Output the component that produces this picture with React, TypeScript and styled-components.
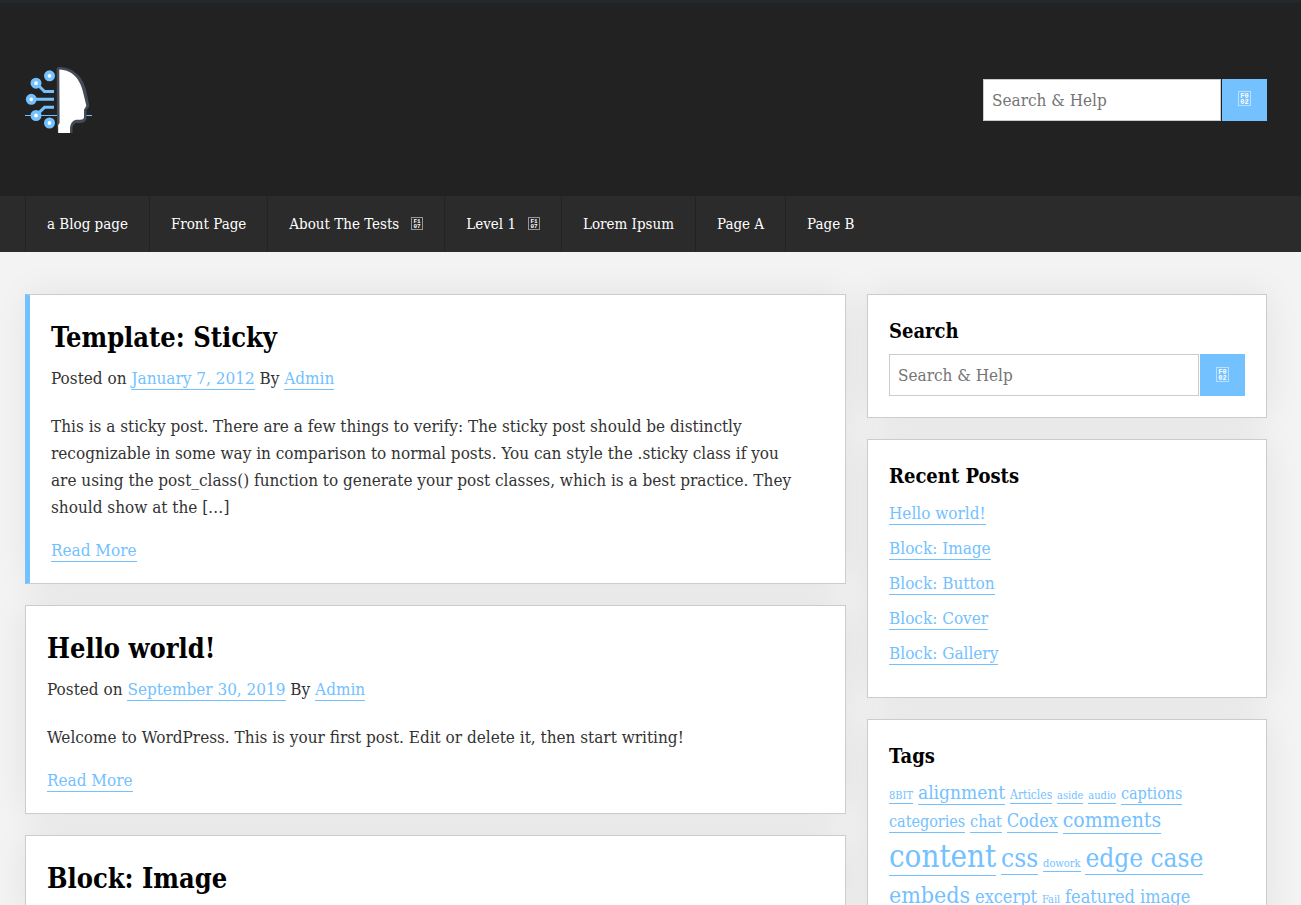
import React from "react";
import styled, { createGlobalStyle } from "styled-components";

const GlobalStyle = createGlobalStyle`
  *, *::before, *::after { box-sizing: border-box; }
  body {
    margin: 0;
    background: #f3f3f3;
    color: #333;
    font-family: "Roboto Slab", "DejaVu Serif Condensed", "DejaVu Serif", serif;
    font-size: 17px;
    line-height: 27px;
  }
`;

const Page = styled.div`
  height: 100vh;
  overflow: hidden;
`;

const Header = styled.header`
  display: flex;
  align-items: center;
  justify-content: space-between;
  height: 196px;
  padding: 0 34px 0 25px;
  background: #222;
  border-top: 3px solid #23282d;
`;

const LogoLink = styled.a`
  display: block;
  padding-top: 2px;
  line-height: 0;
`;

const SearchForm = styled.form<{ $wide?: boolean }>`
  display: grid;
  grid-template-columns: 1fr 45px;
  gap: 1px;
  width: ${(p) => (p.$wide ? "100%" : "284px")};
  margin-top: ${(p) => (p.$wide ? "8px" : "0")};
`;

const SearchInput = styled.input`
  min-width: 0;
  height: 42px;
  padding: 0 8px;
  border: 1px solid #ccc;
  border-radius: 0;
  background: #fff;
  color: #333;
  font: inherit;
  &::placeholder { color: #757575; opacity: 1; }
`;

const SearchButton = styled.button`
  display: flex;
  align-items: center;
  justify-content: center;
  padding: 0 0 2px;
  border: 0;
  background: #73c1ff;
  color: #fff;
  cursor: pointer;
`;

const Nav = styled.nav`
  background: #2b2b2b;
  padding: 0 34px 0 25px;
`;

const Menu = styled.ul`
  display: flex;
  margin: 0;
  padding: 0;
  list-style: none;
`;

const MenuLink = styled.a`
  display: flex;
  align-items: center;
  gap: 12px;
  height: 56px;
  padding: 0 21px;
  border-left: 1px solid #222;
  color: #fff;
  font-size: 15px;
  text-decoration: none;
`;

const SubMark = styled.span`
  display: flex;
  padding-bottom: 2px;
`;

const Content = styled.div`
  display: grid;
  grid-template-columns: 1fr 400px;
  gap: 21px;
  padding: 42px 34px 0 25px;
  isolation: isolate;
`;

const Column = styled.div`
  display: flex;
  flex-direction: column;
  gap: 21px;
`;

const Card = styled.section`
  position: relative;
  padding: 21px;
  border: 1px solid #ccc;
  background: #fff;
  &::before {
    content: "";
    position: absolute;
    inset: 0;
    z-index: -1;
    box-shadow: 0 0 34px rgba(0, 0, 0, 0.08);
  }
`;

const Post = styled(Card)<{ $sticky?: boolean }>`
  padding-bottom: 19px;
  ${(p) => p.$sticky && "border-left: 5px solid #73c1ff;"}
`;

const PostTitle = styled.h2`
  margin: 0;
  color: #000;
  font-size: 27px;
  font-weight: 700;
  line-height: 44px;
`;

const WidgetTitle = styled.h3`
  margin: 0;
  color: #000;
  font-size: 20px;
  font-weight: 700;
  line-height: 30px;
`;

const TextLink = styled.a`
  padding-bottom: 1px;
  color: #73c1ff;
  border-bottom: 1px solid #73c1ff;
  text-decoration: none;
`;

const Meta = styled.p`
  margin: 5px 0 21px;
`;

const Excerpt = styled.p`
  margin: 0 0 16px;
  padding-right: 18px;
`;

const More = styled.p`
  margin: 0;
`;

const RecentList = styled.ul`
  margin: 9px 0;
  padding: 0;
  list-style: none;
`;

const RecentItem = styled.li`
  margin-bottom: 8px;
`;

const Tags = styled.div`
  margin-top: 8px;
  line-height: 1.4;
`;

const Tag = styled(TextLink)<{ $size: number }>`
  font-size: ${(p) => p.$size}px;
`;

const Missing = ({ top, bottom, large }: { top: string; bottom: string; large?: boolean }) => (
  <svg width={large ? 13 : 12} height={large ? 15 : 13} viewBox={large ? "0 0 13 15" : "0 0 12 13"} aria-hidden="true">
    <rect
      x="0.5"
      y="0.5"
      width={large ? 12 : 11}
      height={large ? 14 : 12}
      fill="none"
      stroke="currentColor"
      strokeOpacity="0.5"
    />
    <g fill="currentColor" fontFamily="Liberation Mono" fontSize={large ? 7 : 6} fontWeight="700" textAnchor="middle">
      <text x={large ? 6.5 : 6} y={large ? 7 : 6}>{top}</text>
      <text x={large ? 6.5 : 6} y={large ? 13 : 11}>{bottom}</text>
    </g>
  </svg>
);

const Logo = () => (
  <svg width="67" height="67" viewBox="0 0 67 67" aria-hidden="true">
    <path d="M0 48.5H67" stroke="#73c1ff" />
    <g fill="none" stroke="#73c1ff" strokeWidth="3">
      <path d="M11 16L19.500 24.500H29M6 32.300H29M11 48.500L19.500 40.300H29" />
    </g>
    <g fill="#fff" stroke="#73c1ff" strokeWidth="3.600">
      <circle cx="24.500" cy="8.800" r="3.700" />
      <circle cx="11" cy="16.200" r="3.700" />
      <circle cx="6.300" cy="32.300" r="3.700" />
      <circle cx="11" cy="48.500" r="3.700" />
      <circle cx="24.500" cy="56" r="3.700" />
    </g>
    <path d="M31.700 1.500Q32 0 34.500 0C51 1 59 12 61.500 25L64.300 38.500Q64.500 40 61.500 43V51Q61 56 55 56H51Q48 57 47.500 61V66H33Q32 60 32 54Z" fill="#424b57" />
    <path d="M34.300 2.500C49 3 56 14 58.500 27L61.300 38.500Q61 40 59 42.500V50.500Q58.500 52.700 55 52.700H51Q45.500 54 45 61V66H33.200V58L34.600 56Z" fill="#fff" />
  </svg>
);

const Search = ({ id, wide }: { id: string; wide?: boolean }) => (
  <SearchForm role="search" $wide={wide} onSubmit={(e) => e.preventDefault()}>
    <SearchInput id={id} type="search" aria-label="Search & Help" placeholder="Search & Help" />
    <SearchButton type="submit" aria-label="Search">
      <Missing top="F0" bottom="02" large />
    </SearchButton>
  </SearchForm>
);

const menu = [
  { label: "a Blog page" },
  { label: "Front Page" },
  { label: "About The Tests", sub: true },
  { label: "Level 1", sub: true },
  { label: "Lorem Ipsum" },
  { label: "Page A" },
  { label: "Page B" },
];

const posts = [
  {
    title: "Template: Sticky",
    date: "January 7, 2012",
    sticky: true,
    text: "This is a sticky post. There are a few things to verify: The sticky post should be distinctly recognizable in some way in comparison to normal posts. You can style the .sticky class if you are using the post_class() function to generate your post classes, which is a best practice. They should show at the […]",
  },
  {
    title: "Hello world!",
    date: "September 30, 2019",
    text: "Welcome to WordPress. This is your first post. Edit or delete it, then start writing!",
  },
  { title: "Block: Image" },
];

const recent = ["Hello world!", "Block: Image", "Block: Button", "Block: Cover", "Block: Gallery"];

const tags: [string, number][] = [
  ["8BIT", 11], ["alignment", 19], ["Articles", 12], ["aside", 11], ["audio", 11], ["captions", 16],
  ["categories", 16], ["chat", 16], ["Codex", 18], ["comments", 21], ["content", 31], ["css", 26],
  ["dowork", 11], ["edge case", 26], ["embeds", 23], ["excerpt", 18], ["Fail", 11], ["featured image", 18],
];

export default function App() {
  return (
    <Page>
      <GlobalStyle />
      <Header>
        <LogoLink href="#" aria-label="Home"><Logo /></LogoLink>
        <Search id="header-search" />
      </Header>
      <Nav>
        <Menu>
          {menu.map((m) => (
            <li key={m.label}>
              <MenuLink href="#">
                {m.label}
                {m.sub && <SubMark><Missing top="F1" bottom="07" /></SubMark>}
              </MenuLink>
            </li>
          ))}
        </Menu>
      </Nav>
      <Content>
        <Column as="main">
          {posts.map((p) => (
            <Post as="article" key={p.title} $sticky={p.sticky}>
              <PostTitle>{p.title}</PostTitle>
              {p.date && (
                <Meta>
                  Posted on <TextLink href="#">{p.date}</TextLink> By <TextLink href="#">Admin</TextLink>
                </Meta>
              )}
              {p.text && <Excerpt>{p.text}</Excerpt>}
              {p.text && <More><TextLink href="#">Read More</TextLink></More>}
            </Post>
          ))}
        </Column>
        <Column as="aside">
          <Card>
            <WidgetTitle>Search</WidgetTitle>
            <Search id="side-search" wide />
          </Card>
          <Card>
            <WidgetTitle>Recent Posts</WidgetTitle>
            <RecentList>
              {recent.map((r) => (
                <RecentItem key={r}><TextLink href="#">{r}</TextLink></RecentItem>
              ))}
            </RecentList>
          </Card>
          <Card>
            <WidgetTitle>Tags</WidgetTitle>
            <Tags>
              {tags.map(([name, size]) => (
                <React.Fragment key={name}>
                  <Tag href="#" $size={size}>{name}</Tag>{" "}
                </React.Fragment>
              ))}
            </Tags>
          </Card>
        </Column>
      </Content>
    </Page>
  );
}
